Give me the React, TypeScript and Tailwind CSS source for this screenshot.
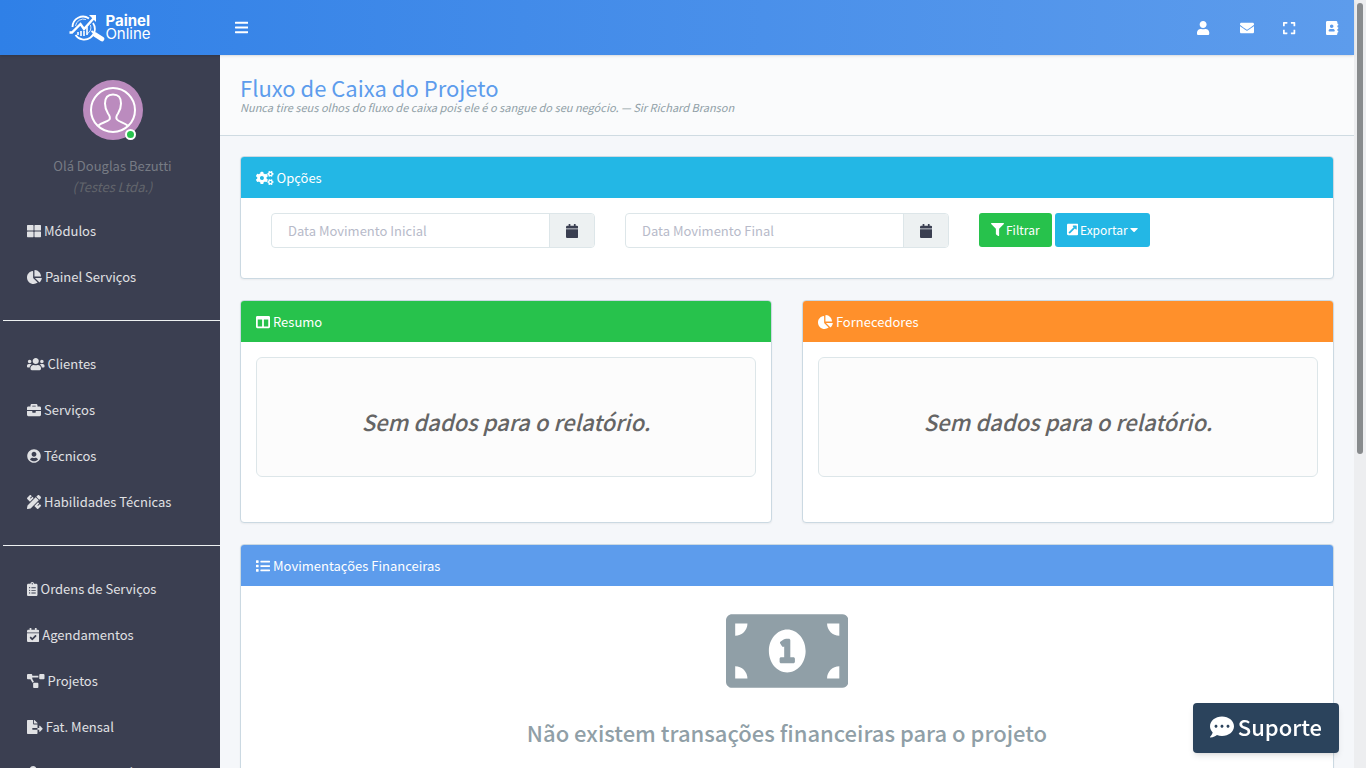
import type { ReactNode } from "react";
import type { IconType } from "react-icons";
import {
  FaAddressBook,
  FaBars,
  FaBriefcase,
  FaCalendar,
  FaCalendarCheck,
  FaCaretDown,
  FaChartPie,
  FaClipboardList,
  FaCogs,
  FaColumns,
  FaCommentDots,
  FaEnvelope,
  FaExpand,
  FaExternalLinkSquareAlt,
  FaFileExport,
  FaFilter,
  FaList,
  FaMoneyBillAlt,
  FaPencilRuler,
  FaProjectDiagram,
  FaThLarge,
  FaUser,
  FaUserCircle,
  FaUserCog,
  FaUsers,
} from "react-icons/fa";

type NavItem = { label: string; icon: IconType };

const navGroups: NavItem[][] = [
  [
    { label: "Módulos", icon: FaThLarge },
    { label: "Painel Serviços", icon: FaChartPie },
  ],
  [
    { label: "Clientes", icon: FaUsers },
    { label: "Serviços", icon: FaBriefcase },
    { label: "Técnicos", icon: FaUserCircle },
    { label: "Habilidades Técnicas", icon: FaPencilRuler },
  ],
  [
    { label: "Ordens de Serviços", icon: FaClipboardList },
    { label: "Agendamentos", icon: FaCalendarCheck },
    { label: "Projetos", icon: FaProjectDiagram },
    { label: "Fat. Mensal", icon: FaFileExport },
    { label: "Pagamento Técnico", icon: FaUserCog },
  ],
];

const topLinks: NavItem[] = [
  { label: "Perfil", icon: FaUser },
  { label: "Mensagens", icon: FaEnvelope },
  { label: "Tela cheia", icon: FaExpand },
  { label: "Contatos", icon: FaAddressBook },
];

// react-icons draws every glyph in a square box, these keep the natural width
const ratios = new Map<IconType, string>([
  [FaUsers, "aspect-[640/512]"],
  [FaUserCog, "aspect-[640/512]"],
  [FaCogs, "aspect-[640/512]"],
  [FaProjectDiagram, "aspect-[640/512]"],
  [FaMoneyBillAlt, "aspect-[640/512]"],
  [FaFileExport, "aspect-[576/512]"],
  [FaChartPie, "aspect-[544/512]"],
  [FaUser, "aspect-[448/512]"],
  [FaBars, "aspect-[448/512]"],
  [FaExpand, "aspect-[448/512]"],
  [FaAddressBook, "aspect-[448/512]"],
  [FaCalendar, "aspect-[448/512]"],
  [FaCalendarCheck, "aspect-[448/512]"],
  [FaExternalLinkSquareAlt, "aspect-[448/512]"],
  [FaClipboardList, "aspect-[384/512]"],
  [FaCaretDown, "aspect-[320/512]"],
]);

function Icon({ icon: Glyph, size = "h-[14px]" }: { icon: IconType; size?: string }) {
  return <Glyph className={`w-auto shrink-0 ${size} ${ratios.get(Glyph) ?? "aspect-square"}`} />;
}

function Logo() {
  return (
    <a href="#" className="flex items-center justify-center w-[220px] shrink-0 text-white">
      <svg viewBox="0 0 36 28" className="w-9 h-7" fill="none" stroke="currentColor">
        <path d="M3.500 13A10.500 10.500 0 0 1 20 4.500M24 9A10.500 10.500 0 0 1 6.500 21" strokeWidth="1.800" />
        <path d="M6.500 12a8 8 0 0 1 10.500-6.500M21.500 11a8 8 0 0 1-3.500 9" strokeWidth="0.800" />
        <path d="M9 21v-3M12 22v-5M15 22v-5M18 21v-8" strokeWidth="1.600" />
        <path d="M0.500 18.500h2.500l8.500-8.500 3.500 5L25 4" strokeWidth="2.400" />
        <path d="M20 1h7v7z" fill="currentColor" stroke="none" />
        <path d="M22.500 17l3 2.500" strokeWidth="1.800" />
        <path d="M26 20.500l7 4.500" strokeWidth="4.600" strokeLinecap="round" />
      </svg>
      <span className="font-[Inter,sans-serif] text-[15px] leading-[13px] pb-[2px]">
        <b className="block">Painel</b>
        <span className="block">Online</span>
      </span>
    </a>
  );
}

function Avatar() {
  return (
    <div className="relative w-[60px] h-[60px]">
      <svg viewBox="0 0 60 60" className="w-full h-full" fill="none" stroke="#fff" strokeWidth="2">
        <circle cx="30" cy="30" r="30" fill="#bb8bbe" stroke="none" />
        <circle cx="30" cy="30" r="22" />
        <path d="M15.500 45.500c3-3 9-3.500 11-6 1-2 0-4-1.500-6-2-3-3-6-3-10 0-6 3-9 8-9 6 0 8 3 8 9 0 4-1 7-3 10-1.500 2-2.500 4-1 6 2 2.500 7 3 10.500 6" />
      </svg>
      <span className="absolute right-[7px] bottom-0 w-[11px] h-[11px] rounded-full bg-[#27c24c] border-2 border-white" />
    </div>
  );
}

function Sidebar() {
  return (
    <aside className="w-[220px] shrink-0 bg-[#3b3f51] text-[#e0e1e4]">
      <div className="flex flex-col items-center pt-[25px] pl-[5px] pb-[11px] text-[13px] leading-[21px]">
        <Avatar />
        <p className="mt-[15px] text-[#777b84]">Olá Douglas Bezutti</p>
        <p className="italic text-[#62656c]">(Testes Ltda.)</p>
      </div>
      <nav>
        {navGroups.map((group, i) => (
          <ul key={i} className={i > 0 ? "ml-[3px] mt-5 pt-5 border-t border-[#eef2f2]" : ""}>
            {group.map(({ label, icon }) => (
              <li key={label} className={i > 0 ? "-ml-[3px]" : ""}>
                <a href="#" className="flex items-center gap-[3px] h-[46px] pl-[27px] text-[13px]">
                  <Icon icon={icon} />
                  {label}
                </a>
              </li>
            ))}
          </ul>
        ))}
      </nav>
    </aside>
  );
}

type PanelProps = { title: string; icon: IconType; color: string; children: ReactNode };

function Panel({ title, icon, color, children }: PanelProps) {
  return (
    <section className="bg-white border border-[#cbd9e2] rounded-[4px] shadow-xs overflow-hidden">
      <h2 className={`flex items-center gap-[3px] h-[41px] px-[15px] text-[13px] text-white ${color}`}>
        <Icon icon={icon} />
        {title}
      </h2>
      {children}
    </section>
  );
}

function DateField({ id, label }: { id: string; label: string }) {
  return (
    <div className="flex w-[324px] h-[35px] border border-[#dde6e9] rounded-[4px] overflow-hidden">
      <input
        id={id}
        type="text"
        aria-label={label}
        placeholder={label}
        className="flex-1 min-w-0 px-4 text-[13px] placeholder:text-[#b7bac9] outline-none"
      />
      <button
        type="button"
        aria-label={`Abrir calendário: ${label}`}
        className="grid place-items-center w-[45px] bg-[#edf1f2] border-l border-[#dde6e9] text-[#3a3f51]"
      >
        <Icon icon={FaCalendar} />
      </button>
    </div>
  );
}

function EmptyReport() {
  return (
    <div className="px-[15px] pt-[15px] pb-[45px]">
      <div className="grid place-items-center h-[120px] pt-2 bg-[#fcfcfc] border border-[#dde6e9] rounded-[6px]">
        <p className="text-[22px] font-medium italic text-[#656565]">Sem dados para o relatório.</p>
      </div>
    </div>
  );
}

export default function App() {
  return (
    <div className="flex h-screen overflow-hidden bg-[#f5f7fa] font-['Noto_Sans_CJK_SC',sans-serif]">
      <div className="flex flex-col flex-1 min-w-0">
        <header className="relative z-10 flex items-center h-[55px] shrink-0 bg-linear-to-r from-[#2f80e7] to-[#5d9cec] text-white shadow-sm">
          <Logo />
          <button type="button" aria-label="Menu" className="ml-[15px]">
            <Icon icon={FaBars} size="h-[15px]" />
          </button>
          <div className="flex ml-auto">
            {topLinks.map(({ label, icon }) => (
              <a key={label} href="#" aria-label={label} className="grid place-items-center w-[43px] h-[55px]">
                <Icon icon={icon} />
              </a>
            ))}
          </div>
        </header>

        <div className="flex flex-1 min-h-0">
          <Sidebar />
          <main className="flex-1 min-w-0 overflow-hidden">
            <div className="h-[81px] px-5 pt-[18px] bg-[#fafbfc] border-b border-[#cfdbe2]">
              <h1 className="text-[22px] leading-[28px] text-[#5d9cec]">Fluxo de Caixa do Projeto</h1>
              <p className="text-[11px] leading-[12px] italic text-[#909fa7]">
                Nunca tire seus olhos do fluxo de caixa pois ele é o sangue do seu negócio. — Sir Richard Branson
              </p>
            </div>

            <div className="grid gap-[21px] p-5">
              <Panel title="Opções" icon={FaCogs} color="bg-[#23b7e5]">
                <form className="flex gap-[30px] h-20 px-[30px] pt-[15px]">
                  <DateField id="inicio" label="Data Movimento Inicial" />
                  <DateField id="fim" label="Data Movimento Final" />
                  <div className="flex gap-[3px] h-[34px] text-[12px] text-white">
                    <button type="button" className="flex items-center gap-[2px] px-3 pb-px rounded-[3px] bg-[#27c24c]">
                      <Icon icon={FaFilter} size="h-[13px]" />
                      Filtrar
                    </button>
                    <button type="button" className="flex items-center gap-[2px] px-3 pb-px rounded-[3px] bg-[#23b7e5]">
                      <Icon icon={FaExternalLinkSquareAlt} size="h-[13px]" />
                      Exportar
                      <Icon icon={FaCaretDown} size="h-[13px]" />
                    </button>
                  </div>
                </form>
              </Panel>

              <div className="grid grid-cols-2 gap-[30px]">
                <Panel title="Resumo" icon={FaColumns} color="bg-[#27c24c]">
                  <EmptyReport />
                </Panel>
                <Panel title="Fornecedores" icon={FaChartPie} color="bg-[#ff902b]">
                  <EmptyReport />
                </Panel>
              </div>

              <Panel title="Movimentações Financeiras" icon={FaList} color="bg-[#5d9cec]">
                <div className="flex flex-col items-center pt-4 pb-10 text-[#909fa7]">
                  <Icon icon={FaMoneyBillAlt} size="h-[98px]" />
                  <p className="mt-[14px] text-[22px] leading-9 font-medium">
                    Não existem transações financeiras para o projeto
                  </p>
                </div>
              </Panel>
            </div>
          </main>
        </div>
      </div>

      <div className="w-3 shrink-0 px-[3px] pt-[3px] bg-[#edeef0]">
        <div className="h-[451px] rounded-full bg-[#888b8d]" />
      </div>

      <button
        type="button"
        className="fixed z-20 right-[27px] bottom-[15px] flex items-center gap-1 h-[50px] px-[17px] pb-[3px] rounded-[4px] bg-[#2b435c] text-white text-[22px] font-medium shadow-md"
      >
        <Icon icon={FaCommentDots} size="h-6" />
        Suporte
      </button>
    </div>
  );
}
